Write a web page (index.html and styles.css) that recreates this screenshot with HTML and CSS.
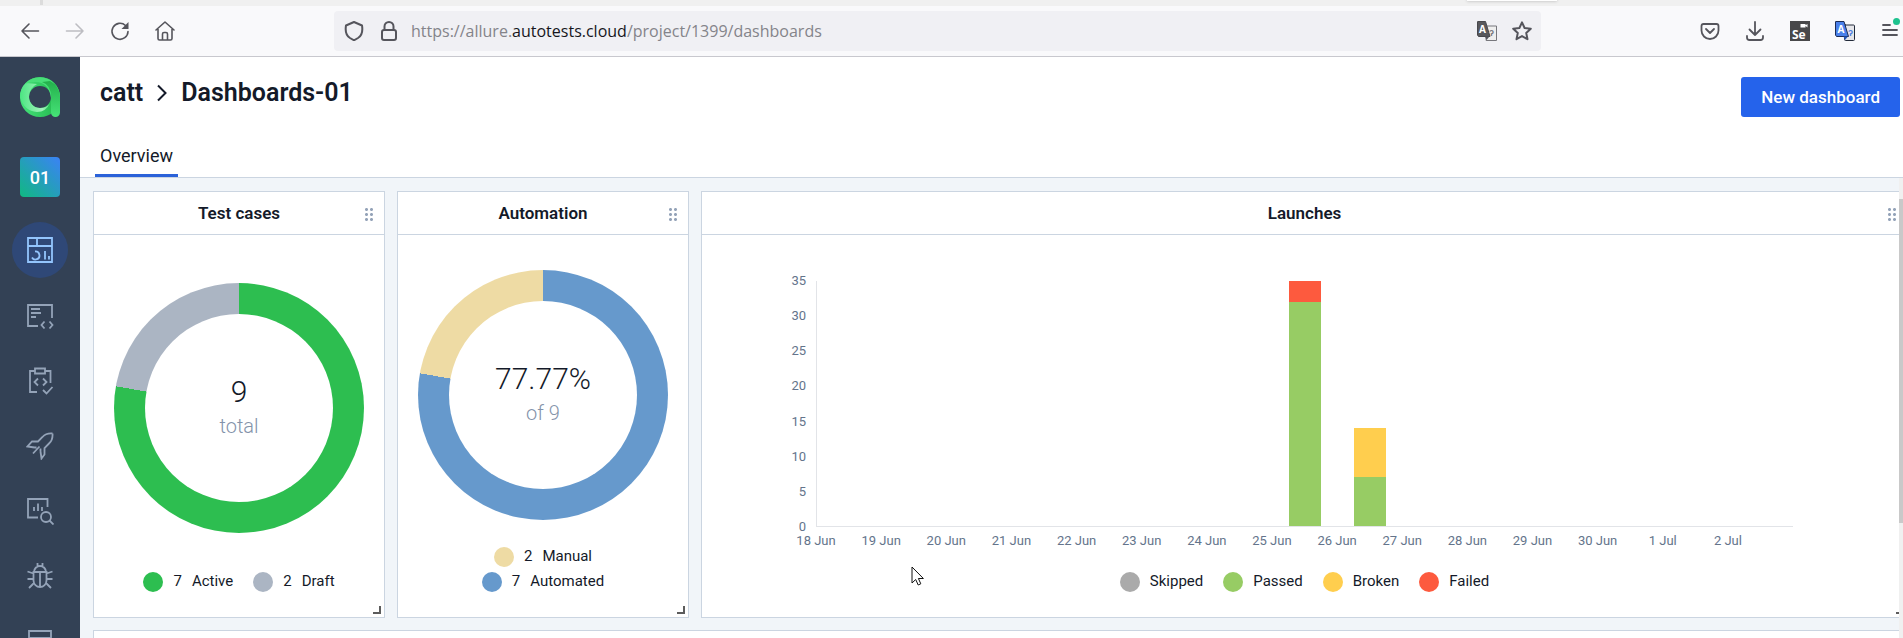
FILE: index.html
```html
<!DOCTYPE html>
<html lang="en">
<head>
<meta charset="utf-8">
<title>Dashboards-01</title>
<link rel="stylesheet" href="styles.css">
</head>
<body>
<div class="tabstrip"><span class="tab-divider"></span><span class="tab-hint"></span></div>
<div class="toolbar">
  <div class="nav-buttons">
    <button class="tool" aria-label="Back"><svg width="20" height="20" viewBox="0 0 20 20"><path d="M18.500 10H2M9 3 2 10l7 7"/></svg></button>
    <button class="tool dim" aria-label="Forward"><svg width="20" height="20" viewBox="0 0 20 20"><path d="M1.500 10H18M11 3l7 7-7 7"/></svg></button>
    <button class="tool" aria-label="Reload"><svg width="20" height="20" viewBox="0 0 20 20"><path d="M18 10.500a8 8 0 1 1-2.500-6"/><path class="solid" d="M18.500 1v7h-7z"/></svg></button>
    <button class="tool" aria-label="Home"><svg width="20" height="20" viewBox="0 0 20 20"><path d="M1 9l9-8 9 8M3 8v9.500q0 1.500 1.500 1.500h11q1.500 0 1.500-1.500V8M7.500 18.500v-5.500q0-1.500 1.500-1.500h2q1.500 0 1.500 1.500v5.500"/></svg></button>
  </div>
  <div class="urlbar">
    <svg class="url-icon" width="20" height="20" viewBox="0 0 20 20"><path d="M10 1l8 3.500q1.500 9-4 12.500l-4 2.300L6 17Q.5 13.500 2 4.500z"/></svg>
    <svg class="url-icon" width="20" height="20" viewBox="0 0 20 20"><rect x="3" y="9" width="14" height="10" rx="2"/><path d="M5.500 9V5.500a4.500 4.500 0 0 1 9 0V9"/></svg>
    <a class="url" href="#">https://allure.<span class="domain">autotests.cloud</span>/project/1399/dashboards</a>
    <button class="tool" aria-label="Translate page"><svg width="20" height="20" viewBox="0 0 20 20"><rect x="9.500" y="5" width="10" height="14.500" fill="#eee" stroke="#77777c" stroke-width="1"/><text x="12" y="15" font-size="9" class="glyph" fill="#77777c">ʔ</text><path d="M1 .5h7.500L13 15.500H1.500L.5 14V1z" fill="#58585c" stroke="#48484c" stroke-width="1"/><path d="M8 15.500h4.500L9.500 19z" class="solid"/><text x="2" y="12" font-size="10" class="glyph" fill="#fff">A</text></svg></button>
    <button class="tool" aria-label="Bookmark"><svg width="20" height="20" viewBox="0 0 20 20"><path d="M10 1.300l2.600 5.700 6.200.7-4.600 4.200 1.300 6.300L10 15.100l-5.500 3.100 1.300-6.300L1.200 7.700l6.200-.7z"/></svg></button>
  </div>
  <div class="extensions">
    <button class="tool" aria-label="Save to Pocket"><svg width="20" height="20" viewBox="0 0 20 20"><path d="M3.500 3h13q2 0 2 2v4.500a8.500 8.500 0 0 1-17 0V5q0-2 2-2zM6 8l4 4 4-4"/></svg></button>
    <button class="tool" aria-label="Downloads"><svg width="20" height="20" viewBox="0 0 20 20"><path d="M10 1v13M4.500 8.500 10 14l5.500-5.500M2 15v1.500Q2 19 4.500 19h11q2.500 0 2.500-2.500V15"/></svg></button>
    <button class="tool" aria-label="Selenium IDE"><svg width="20" height="20" viewBox="0 0 20 20"><rect width="20" height="20" fill="#48484a" stroke="none"/><path d="M10.500 3h5v3.500h-5zM15 4.500l2.500-1.500v3.500z" fill="#fff" stroke="none"/><text x="2" y="17.500" font-size="12" class="glyph" fill="#fff">Se</text></svg></button>
    <button class="tool" aria-label="Translate"><svg width="20" height="20" viewBox="0 0 20 20"><rect x="9.500" y="4" width="10" height="15.500" rx="1" fill="#e6e6ea" stroke="#222a3a" stroke-width="1"/><text x="13" y="15" font-size="9" class="glyph" fill="#4a7de0">ʔ</text><path d="M1 .5h8L13.500 15.500H1.500L.5 14V1z" fill="#4a80ea" stroke="#1c2c55" stroke-width="1"/><path d="M8.500 15.500h4.500L10 19z" fill="#2456bd" stroke="none"/><text x="2.500" y="12" font-size="10" class="glyph" fill="#fff">A</text></svg></button>
    <button class="tool" aria-label="Menu"><svg width="20" height="20" viewBox="0 0 20 20"><path d="M3 4h7M3 9h14M3 14h14"/><circle cx="16.500" cy=".5" r="3.500" fill="#1ec28e" stroke="none"/></svg></button>
  </div>
</div>

<div class="app">
  <nav class="sidebar">
    <a class="logo" href="#" aria-label="Home">
      <svg width="40" height="40" viewBox="0 0 40 40">
        <defs>
          <linearGradient id="g1" x1="0" y1="0" x2="1" y2="0"><stop offset="0" stop-color="#46e37b"/><stop offset="1" stop-color="#22b54c"/></linearGradient>
          <linearGradient id="g2" x1="0" y1="0" x2="0" y2="1"><stop offset="0" stop-color="#24b04c"/><stop offset="1" stop-color="#46e377"/></linearGradient>
          <linearGradient id="g3" x1="0" y1="0" x2="1" y2="0"><stop offset="0" stop-color="#4be582"/><stop offset=".75" stop-color="#a3f2bb"/><stop offset="1" stop-color="#5be287"/></linearGradient>
        </defs>
        <path fill="url(#g1)" fill-rule="evenodd" d="M20 0a20 20 0 1 0 0 40 20 20 0 1 0 0-40zM20 9a11 11 0 1 1 0 22 11 11 0 1 1 0-22z"/>
        <path fill="url(#g3)" d="M0 20Q4 34 17 35q9 0 13-9-3 5-10 5A11 11 0 0 1 9 20q0-9 8-13L6 6Q0 11 0 20z"/>
        <path fill="#48df78" d="M5 7A20 20 0 0 1 40 20l-9 1Q29 5 15 5 9 5 5 7z"/>
        <path fill="url(#g2)" d="M22 5q9 3 9 15v15.500a4.500 4.500 0 0 0 9 0V20Q39 8 30 4z"/>
      </svg>
    </a>
    <a class="project" href="#">01</a>
    <a class="item active" href="#" aria-label="Dashboards"><svg width="28" height="28" viewBox="0 0 28 28"><path d="M2 2h24v24H2zM2 10h24M11 2v8M9 15.500a4 4 0 1 1-3 6M19 15v8.500M23 20v3.500"/></svg></a>
    <a class="item" href="#" aria-label="Test cases"><svg width="28" height="28" viewBox="0 0 28 28"><path d="M12 24H2V3h24v13M5 7h9M5 11h10M5 15h5M18.500 19.500 15.500 23l3 3.500M23.500 19.500l3 3.500-3 3.500"/></svg></a>
    <a class="item" href="#" aria-label="Test plans"><svg width="28" height="28" viewBox="0 0 28 28"><path d="M11 25H4V4h5M19 4h5.500v12M9 1.500h10v5H9zM12 11.500 8.500 15l3.500 3.500M17 11.500l3.500 3.500-3.500 3.500M17 23l3.500 3.500L26.500 20"/></svg></a>
    <a class="item" href="#" aria-label="Launches"><svg width="28" height="28" viewBox="0 0 28 28"><path d="M26.500 1.500Q20 1 16.500 5L12 9.500H6L1.500 14.500l7 1M26.500 1.500Q27 8 23 11.500L18.500 16v6.500L15.500 26.500l-1-7M8.500 15.500l2 0M14.500 19.500v-3M13.500 14.500 7 21.500"/></svg></a>
    <a class="item" href="#" aria-label="Analytics"><svg width="28" height="28" viewBox="0 0 28 28"><path d="M12 20.500H2V2h19.500v8M8 10v4M12 6.500V14M16 10v4"/><circle cx="20" cy="20" r="5"/><path d="M23.500 23.500l4 4"/></svg></a>
    <a class="item" href="#" aria-label="Defects"><svg width="28" height="28" viewBox="0 0 28 28"><path d="M7.500 10h13v8.500a6.500 6.500 0 0 1-13 0zM8 10a6 6 0 0 1 12 0M14 10v15M11.500 1v3.500M16.500 1v3.500M1.500 9.500l6 2M26.500 9.500l-6 2M1.500 17h6M20.500 17h6M8.500 20.500 3 26M19.500 20.500 25 26"/></svg></a>
    <a class="item" href="#" aria-label="Jobs"><svg width="28" height="28" viewBox="0 0 28 28"><path d="M3 4h22v7H3zM3 11v14h22V11M3 18h22"/></svg></a>
  </nav>

  <main class="workspace">
    <header class="page-head">
      <div class="title-row">
        <h1 class="title"><a href="#">catt</a><svg width="10" height="18" viewBox="0 0 10 18"><path d="M1 1.500 8.500 9 1 16.500"/></svg><span>Dashboards-01</span></h1>
        <button class="primary">New dashboard</button>
      </div>
      <div class="tabs"><a class="tab" href="#">Overview</a></div>
    </header>
    <div class="board">
      <section class="card">
        <h2 class="card-head">Test cases<span class="grip"></span></h2>
        <div class="card-body">
          <div class="donut-area">
            <div class="donut active-draft"><div class="hole"><span class="big">9</span><span class="sub">total</span></div></div>
          </div>
          <ul class="legend counts">
            <li><i class="dot green"></i><span>7</span><span>Active</span></li>
            <li><i class="dot gray"></i><span>2</span><span>Draft</span></li>
          </ul>
        </div>
        <span class="resize"></span>
      </section>
      <section class="card">
        <h2 class="card-head">Automation<span class="grip"></span></h2>
        <div class="card-body">
          <div class="donut-area">
            <div class="donut auto-manual"><div class="hole"><span class="big">77.77%</span><span class="sub">of 9</span></div></div>
          </div>
          <ul class="legend counts stacked">
            <li><i class="dot sand"></i><span>2</span><span>Manual</span></li>
            <li><i class="dot blue"></i><span>7</span><span>Automated</span></li>
          </ul>
        </div>
        <span class="resize"></span>
      </section>
      <section class="card">
        <h2 class="card-head">Launches<span class="grip"></span></h2>
        <div class="card-body">
          <div class="chart">
            <div class="y-axis"><span>35</span><span>30</span><span>25</span><span>20</span><span>15</span><span>10</span><span>5</span><span>0</span></div>
            <div class="plot">
              <div class="bar day-8" style="height:100%"><i class="failed" style="flex-grow:3"></i><i class="passed" style="flex-grow:32"></i></div>
              <div class="bar day-9" style="height:40%"><i class="broken" style="flex-grow:7"></i><i class="passed" style="flex-grow:7"></i></div>
            </div>
            <div class="x-axis"><span>18 Jun</span><span>19 Jun</span><span>20 Jun</span><span>21 Jun</span><span>22 Jun</span><span>23 Jun</span><span>24 Jun</span><span>25 Jun</span><span>26 Jun</span><span>27 Jun</span><span>28 Jun</span><span>29 Jun</span><span>30 Jun</span><span>1 Jul</span><span>2 Jul</span></div>
          </div>
          <ul class="legend">
            <li><i class="dot skipped"></i><span>Skipped</span></li>
            <li><i class="dot passed"></i><span>Passed</span></li>
            <li><i class="dot broken"></i><span>Broken</span></li>
            <li><i class="dot failed"></i><span>Failed</span></li>
          </ul>
        </div>
        <span class="resize"></span>
      </section>
      <section class="card wide"></section>
    </div>
  </main>
  <div class="scrollbar"><div class="thumb"></div></div>
</div>
<svg class="cursor" width="14" height="20" viewBox="0 0 14 20"><path d="M1 1v16l3.700-3.500L7.200 19l2.600-1.200-2.400-5.300h5z"/></svg>
</body>
</html>
```

FILE: styles.css
```css
* { box-sizing: border-box; }
body {
  margin: 0;
  height: 100vh;
  display: flex;
  flex-direction: column;
  overflow: hidden;
  background: #fff;
  color: #141a29;
  font-family: Roboto, "Liberation Sans", sans-serif;
  font-size: 15px;
}
a { color: inherit; text-decoration: none; }
button { border: 0; padding: 0; background: none; font: inherit; }
ul { list-style: none; margin: 0; padding: 0; }

.tabstrip { height: 6px; flex: none; background: #f0f0f0; display: flex; justify-content: space-between; padding: 0 346px 0 40px; }
.tab-divider { width: 3px; height: 5px; background: #dcdcdc; }
.tab-hint { width: 90px; height: 1px; background: #fff; box-shadow: 0 0 3px #888; }

.toolbar {
  flex: none;
  height: 51px;
  display: flex;
  align-items: center;
  background: #f9f9fb;
  border-bottom: 1px solid #c8c8ce;
}
.nav-buttons { display: flex; gap: 25px; padding: 0 159px 0 20px; }
.tool { display: flex; }
.tool svg, .url-icon { fill: none; stroke: #55555c; stroke-width: 2; stroke-linejoin: round; stroke-linecap: round; }
.tool svg { overflow: visible; }
.nav-buttons .tool svg { stroke-width: 1.6; }
.tool.dim svg { stroke: #bdbdc2; }
.tool .solid { fill: #55555c; stroke: none; }
.glyph { font-family: "Open Sans", sans-serif; font-weight: 700; stroke: none; }
.urlbar {
  flex: 1;
  height: 40px;
  display: flex;
  align-items: center;
  gap: 15px;
  padding: 0 9px 0 10px;
  background: #f0f0f4;
  border-radius: 4px;
}
.urlbar .url-icon + .url-icon { margin-right: -3px; }
.url { flex: 1; font-family: "Open Sans", sans-serif; font-size: 16px; color: #84848a; }
.domain { color: #16161c; }
.extensions { display: flex; gap: 25px; padding: 0 3px 0 159px; }
.extensions .tool svg { stroke-width: 1.8; }

.app { flex: 1; min-height: 0; display: flex; position: relative; overflow: hidden; }
.sidebar { flex: none; width: 80px; background: #334155; display: flex; flex-direction: column; align-items: center; padding-top: 20px; }
.logo { height: 40px; margin-bottom: 40px; flex: none; }
.project {
  flex: none;
  width: 40px;
  line-height: 42px;
  height: 40px;
  margin-bottom: 21px;
  border-radius: 4px;
  background: linear-gradient(45deg, #10b981, #3b82f6);
  color: #fff;
  font-size: 18px;
  font-weight: 500;
  text-align: center;
}
.item { flex: none; height: 65px; width: 56px; display: flex; align-items: center; justify-content: center; }
.item svg { fill: none; stroke: #94a3b8; stroke-width: 1.8; }
.item.active { height: 56px; margin: 4px 0 5px; border-radius: 50%; background: #2f4877; }
.item.active svg { stroke: #93c5fd; }

/* The workspace runs under the scrollbar and past the window edge. */
.workspace { flex: 1; min-width: 0; margin-right: -17px; background: #f1f5f9; }
.page-head { background: #fff; border-bottom: 1px solid #cbd5e1; padding: 20px 20px 0 15px; }
.title-row { display: flex; justify-content: space-between; align-items: flex-start; padding-left: 5px; }
.title { margin: 0; display: flex; align-items: center; gap: 14px; font-size: 25px; font-weight: 600; line-height: 32px; }
.title svg { fill: none; stroke: #141a29; stroke-width: 2; }
.primary { height: 40px; padding: 0 20px; border-radius: 3px; background: #2563eb; color: #fff; font-size: 17px; font-weight: 500; }
.tabs { display: flex; margin-top: 20px; }
.tab { padding: 0 5px; line-height: 37px; font-size: 18px; border-bottom: 3px solid #2b62d9; }

.board {
  display: grid;
  grid-template-columns: 292px 292px minmax(0, 1fr);
  grid-template-rows: minmax(427px, auto) 426px;
  gap: 12px;
  padding: 13px 12px 13px 13px;
}
.card { position: relative; display: flex; flex-direction: column; background: #fff; border: 1px solid #cbd5e1; }
.wide { grid-column: 1 / -1; }
.card-head { position: relative; margin: 0; border-bottom: 1px solid #cbd5e1; font-size: 17px; font-weight: 600; line-height: 42px; text-align: center; }
.grip { position: absolute; right: 10px; top: 15px; width: 10px; height: 15px; background: radial-gradient(circle, #94a3b8 1px, transparent 2px) 0 0 / 5px 5px; }
.card-body { flex: 1; display: flex; flex-direction: column; padding: 11px 0 23px; }
.resize { position: absolute; right: 3px; bottom: 3px; width: 8px; height: 8px; border: solid #5c5c5c; border-width: 0 2px 2px 0; }

.donut-area { flex: 1; display: grid; place-items: center; }
.donut { width: 250px; height: 250px; padding: 31px; border-radius: 50%; }
.active-draft { background: conic-gradient(#2dbe50 0 77.78%, #abb5c3 77.78%); }
.auto-manual { background: conic-gradient(#6699cc 0 77.78%, #eedba4 77.78%); }
.hole { height: 100%; border-radius: 50%; background: #fff; display: flex; flex-direction: column; justify-content: center; align-items: center; }
.big { font-size: 30px; font-weight: 300; line-height: 36px; }
.sub { font-size: 20px; font-weight: 300; line-height: 32px; color: #8493aa; }

.legend { display: flex; justify-content: center; gap: 20px; line-height: 25px; }
.legend li { display: flex; align-items: center; gap: 10px; }
.stacked { flex-direction: column; align-items: center; gap: 0; }
.dot { width: 20px; height: 20px; border-radius: 50%; }
.green { background: #2dbe50; }
.gray { background: #abb5c3; }
.sand { background: #eedba4; }
.blue { background: #6699cc; }
.skipped { background: #aaa; }
.passed { background: #97cc64; }
.broken { background: #ffce4e; }
.failed { background: #fd5a3e; }

.chart {
  flex: 1;
  display: grid;
  grid-template-columns: 104px minmax(0, 1fr);
  grid-template-rows: minmax(0, 1fr) 27px;
  column-gap: 10px;
  padding: 35px 114px 15px 0;
  font-size: 13px;
  color: #64748b;
}
.y-axis { display: flex; flex-direction: column; justify-content: space-between; text-align: right; line-height: 16px; margin: -8px 0; }
.plot { display: grid; grid-template-columns: repeat(15, 1fr); align-items: end; border: solid #e2e4e8; border-width: 0 0 1px 1px; }
.bar { display: flex; flex-direction: column; width: 50%; justify-self: center; grid-row: 1; }
.day-8 { grid-column: 8; }
.day-9 { grid-column: 9; }
.x-axis { grid-column: 2; display: grid; grid-template-columns: repeat(15, 1fr); margin: 0 3.33% 0 -3.33%; line-height: 28px; text-align: center; }

.scrollbar { position: absolute; right: 0; top: 121px; bottom: 0; width: 4px; background: #f0f0f0; padding-top: 21px; }
.thumb { height: 324px; background: #c9c9c9; }
.cursor { position: absolute; left: 911px; top: 566px; fill: #fff; stroke: #111; stroke-width: 1; }
```
